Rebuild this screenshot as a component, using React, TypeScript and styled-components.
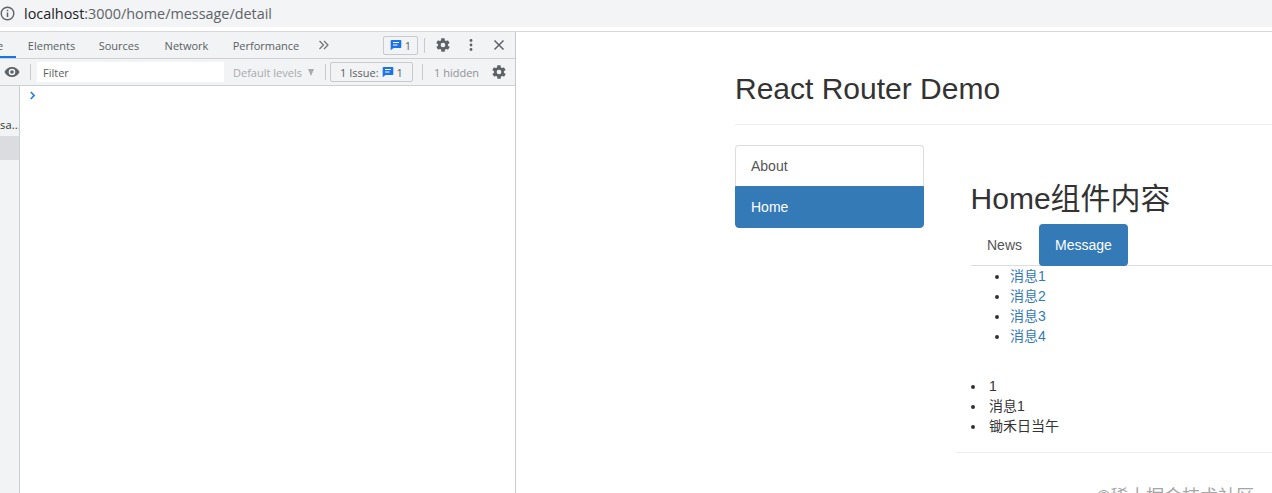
import React from "react";
import styled, { createGlobalStyle } from "styled-components";

const Global = createGlobalStyle`
  html, body { margin: 0; padding: 0; background: #fff; }
  body { width: 1272px; height: 493px; overflow: hidden; font-family: "Liberation Sans", "Noto Sans CJK SC", sans-serif; }
  * { box-sizing: border-box; }
`;

const Page = styled.div`
  width: 1272px; height: 493px; display: flex; flex-direction: column; overflow: hidden; position: relative;
`;
const AddressBar = styled.div`
  height: 27px; background: #f2f4f5; display: flex; align-items: center; padding: 0 0 1px 0; flex: none;
`;
const InfoIcon = styled.svg`
  width: 15px; height: 15px; margin-right: 9px; flex: none;
`;
const UrlHost = styled.span`
  font: 14.4px "Open Sans", "Liberation Sans", sans-serif; color: #202124;
`;
const UrlRest = styled.span`
  font: 14.4px "Open Sans", "Liberation Sans", sans-serif; color: #5f6368;
`;
const Spacer = styled.div`
  height: 4px; background: #fff; flex: none;
`;
const Body = styled.div`
  flex: 1; display: flex; min-height: 0; border-top: 1px solid #d5d7d9;
`;
const DevTools = styled.div`
  width: 516px; flex: none; display: flex; flex-direction: column; border-right: 1px solid #c8cacc;
  font: 11px "Open Sans", "Liberation Sans", sans-serif; color: #5a5a5a;
`;
const TabBar = styled.div`
  height: 27px; background: #f1f3f4; border-bottom: 1px solid #cdd0d3; display: flex; align-items: center; flex: none; overflow: hidden;
`;
const Tab = styled.div<{ $w: number; $active?: boolean }>`
  width: ${p => p.$w}px; height: 26px; line-height: 27px; text-align: ${p => (p.$active ? "left" : "center")}; text-indent: ${p => (p.$active ? "-3px" : "0")}; font-size: 11px; flex: none; color: #5a5f63;
  border-bottom: ${p => (p.$active ? "2px solid #1a73e8" : "none")};
`;
const TabRight = styled.div`
  margin-left: auto; display: flex; align-items: center; height: 100%; padding-right: 8px;
`;
const IssueChip = styled.div`
  display: flex; align-items: center; justify-content: center; gap: 3px; border: 1px solid #c8cacc; border-radius: 2px; color: #5a5f63; font-size: 11px; white-space: nowrap;
`;
const TopChip = styled(IssueChip)`
  width: 35px; height: 19px; margin-right: 6px;
`;
const FilterChip = styled(IssueChip)`
  width: 83px; height: 20px; margin-left: 4px; margin-right: 9px;
`;
const Sep = styled.div<{ $h?: number; $ml?: number }>`
  width: 1px; height: ${p => p.$h ?? 15}px; margin-left: ${p => p.$ml ?? 0}px; background: #c8cacc; flex: none;
`;
const ToolIcon = styled.svg<{ $ml?: number }>`
  width: 16px; height: 16px; flex: none; margin-left: ${p => p.$ml ?? 0}px; display: block;
`;
const FilterBar = styled.div`
  height: 27px; background: #f1f3f4; border-bottom: 1px solid #cdd0d3; display: flex; align-items: center; flex: none;
`;
const FilterInput = styled.div`
  width: 187px; height: 20px; background: #fff; margin-left: 6px; margin-right: 9px; padding-left: 6px; line-height: 21px; font-size: 11px; color: #5a5f63; flex: none;
`;
const Levels = styled.div`
  font-size: 11px; color: #a8aaac; width: 92px; flex: none; white-space: nowrap; display: flex; align-items: center; gap: 6px;
`;
const LevelsCaret = styled.span`
  width: 0; height: 0; border-left: 3.5px solid transparent; border-right: 3.5px solid transparent; border-top: 7px solid #a8aaac;
`;
const Hidden = styled.div`
  font-size: 11px; color: #909295; margin-left: 11px; white-space: nowrap; flex: none; width: 46px;
`;
const ConsoleArea = styled.div`
  flex: 1; display: flex; min-height: 0; background: #fff;
`;
const Sidebar = styled.div`
  width: 20px; flex: none; background: #f1f3f4; border-right: 1px solid #cdd0d3; overflow: hidden; padding-top: 30px;
`;
const SideText = styled.div`
  height: 20px; line-height: 18px; font-size: 11px; color: #333; white-space: nowrap; letter-spacing: 0.2px;
`;
const SideSelected = styled.div`
  height: 24px; background: #dadce0;
`;
const ConsoleMain = styled.div`
  flex: 1; padding: 5px 0 0 9px;
`;
const Site = styled.div`
  flex: 1; min-width: 0; padding-left: 219px; color: #333; font-size: 14px; line-height: 20px; overflow: hidden; background: #fff;
`;
const PageHeader = styled.div`
  height: 93px; border-bottom: 1px solid #eee; padding-top: 40px;
`;
const Title = styled.h2`
  margin: 0; font-size: 30px; font-weight: 400; line-height: 33px; color: #333; white-space: nowrap;
`;
const Columns = styled.div`
  display: flex; padding-top: 20px;
`;
const SideNav = styled.div`
  width: 189px; flex: none; display: flex; flex-direction: column; align-self: flex-start;
`;
const NavLink = styled.div<{ $active?: boolean }>`
  height: ${p => (p.$active ? 42 : 41)}px; padding: ${p => (p.$active ? "10px 15px" : "10px 15px 0")};
  border: 1px solid ${p => (p.$active ? "#337ab7" : "#ddd")};
  border-bottom-width: ${p => (p.$active ? 1 : 0)}px;
  border-radius: ${p => (p.$active ? "0 0 4px 4px" : "4px 4px 0 0")};
  background: ${p => (p.$active ? "#337ab7" : "#fff")}; color: ${p => (p.$active ? "#fff" : "#555")};
`;
const Panel = styled.div`
  margin-left: 32px; width: 400px; flex: none; height: 308px; border-bottom: 1px solid #eee; padding: 37px 0 0 15px;
`;
const Heading = styled.h2`
  margin: 0 0 9px 0; font-size: 30px; font-weight: 400; line-height: 33px; color: #333; white-space: nowrap; transform: translateX(-0.4px);
`;
const Tabs = styled.div`
  display: flex; border-bottom: 1px solid #ddd; height: 42px;
`;
const PillTab = styled.div<{ $active?: boolean }>`
  height: 42px; padding: 11px 16px 0; border-radius: 4px; background: ${p => (p.$active ? "#337ab7" : "transparent")}; color: ${p => (p.$active ? "#fff" : "#555")}; margin-right: 1px;
`;
const MsgList = styled.ul`
  margin: 0 0 30px; padding: 0 0 0 39px;
`;
const Msg = styled.li`
  color: #333;
`;
const MsgLink = styled.a`
  color: #337ab7; text-decoration: none;
`;
const Detail = styled.ul`
  margin: 0; padding: 0 0 0 15px;
`;
const DetailItem = styled.li`
  padding-left: 3px;
`;
const Watermark = styled.div`
  position: absolute; left: 1097px; top: 486px; color: #a6a6a6; font-size: 18px; line-height: 22px; white-space: nowrap;
`;

const Gear = ({ ml }: { ml?: number }) => (
  <ToolIcon $ml={ml} viewBox="0 0 24 24" fill="#5f6368">
    <path d="M19.4 13a7.6 7.6 0 0 0 0-2l2.1-1.6a.5.5 0 0 0 .1-.7l-2-3.4a.5.5 0 0 0-.6-.2l-2.5 1a7.4 7.4 0 0 0-1.7-1l-.4-2.7a.5.5 0 0 0-.5-.4h-4a.5.5 0 0 0-.5.4l-.4 2.7a7.4 7.4 0 0 0-1.7 1l-2.5-1a.5.5 0 0 0-.6.2l-2 3.4a.5.5 0 0 0 .1.7L4.6 11a7.6 7.6 0 0 0 0 2l-2.1 1.6a.5.5 0 0 0-.1.7l2 3.4c.1.2.4.3.6.2l2.5-1c.5.4 1.1.7 1.7 1l.4 2.7c0 .2.3.4.5.4h4c.2 0 .5-.2.5-.4l.4-2.7c.6-.3 1.2-.6 1.7-1l2.5 1c.2.1.5 0 .6-.2l2-3.4a.5.5 0 0 0-.1-.7zM12 15.5a3.5 3.5 0 1 1 0-7 3.5 3.5 0 0 1 0 7z" />
  </ToolIcon>
);
const Bubble = () => (
  <svg width="12" height="12" viewBox="0 0 12 12" style={{ flex: "none" }}>
    <path d="M1.5 1h9a.8.8 0 0 1 .8.8v6.4a.8.8 0 0 1-.8.8H3.5L.7 11.3V1.8A.8.8 0 0 1 1.5 1z" fill="#1a73e8" />
    <path d="M3 3.5h6M3 6h4.5" stroke="#fff" strokeWidth="1.2" />
  </svg>
);

const messages = ["消息1", "消息2", "消息3", "消息4"];

export default function App() {
  return (
    <Page>
      <Global />
      <AddressBar>
        <InfoIcon viewBox="0 0 15 15">
          <circle cx="7.500" cy="7.500" r="6.300" fill="none" stroke="#5f6368" strokeWidth="1.4" />
          <path d="M7.500 6.500v4.500M7.500 3.800v1.500" stroke="#5f6368" strokeWidth="1.5" />
        </InfoIcon>
        <UrlHost>localhost</UrlHost>
        <UrlRest>:3000/home/message/detail</UrlRest>
      </AddressBar>
      <Spacer />
      <Body>
        <DevTools>
          <TabBar>
            <Tab $w={16} $active>e</Tab>
            <Tab $w={71}>Elements</Tab>
            <Tab $w={64}>Sources</Tab>
            <Tab $w={71}>Network</Tab>
            <Tab $w={88}>Performance</Tab>
            <ToolIcon $ml={6} viewBox="0 0 16 16" fill="none" stroke="#6e7174" strokeWidth="1.2">
              <path d="M3.500 4l4 4-4 4M8 4l4 4-4 4" />
            </ToolIcon>
            <TabRight>
              <TopChip><Bubble />1</TopChip>
              <Sep />
              <Gear ml={10} />
              <ToolIcon $ml={12} viewBox="0 0 16 16" fill="#5f6368">
                <circle cx="8" cy="3.500" r="1.400" />
                <circle cx="8" cy="8" r="1.400" />
                <circle cx="8" cy="12.500" r="1.400" />
              </ToolIcon>
              <ToolIcon $ml={12} viewBox="0 0 16 16" fill="none" stroke="#5f6368" strokeWidth="1.500">
                <path d="M3.500 3.500l9 9M12.500 3.500l-9 9" />
              </ToolIcon>
            </TabRight>
          </TabBar>
          <FilterBar>
            <ToolIcon $ml={4} viewBox="0 0 16 16" fill="#5f6368">
              <path d="M8 3C4.500 3 1.600 5.100.5 8c1.100 2.900 4 5 7.500 5s6.400-2.100 7.500-5C14.400 5.100 11.500 3 8 3zm0 8.300A3.300 3.300 0 1 1 8 4.700a3.300 3.300 0 0 1 0 6.600zM8 6.200a1.800 1.800 0 1 0 0 3.600 1.800 1.800 0 0 0 0-3.600z" />
            </ToolIcon>
            <Sep $h={16} $ml={10} />
            <FilterInput>Filter</FilterInput>
            <Levels>Default levels <LevelsCaret /></Levels>
            <Sep $h={16} />
            <FilterChip>1 Issue: <Bubble /> 1</FilterChip>
            <Sep $h={16} />
            <Hidden>1 hidden</Hidden>
            <Gear ml={11} />
          </FilterBar>
          <ConsoleArea>
            <Sidebar>
              <SideText>sa...</SideText>
              <SideSelected />
            </Sidebar>
            <ConsoleMain>
              <svg width="7" height="9" viewBox="0 0 7 9" style={{ display: "block" }} fill="none" stroke="#2b7de9" strokeWidth="1.700">
                <path d="M1.800 1l3.300 3.500L1.800 8" />
              </svg>
            </ConsoleMain>
          </ConsoleArea>
        </DevTools>
        <Site>
          <PageHeader>
            <Title>React Router Demo</Title>
          </PageHeader>
          <Columns>
            <SideNav>
              <NavLink>About</NavLink>
              <NavLink $active>Home</NavLink>
            </SideNav>
            <Panel>
              <Heading>Home组件内容</Heading>
              <Tabs>
                <PillTab>News</PillTab>
                <PillTab $active>Message</PillTab>
              </Tabs>
              <MsgList>
                {messages.map(m => (
                  <Msg key={m}><MsgLink>{m}</MsgLink></Msg>
                ))}
              </MsgList>
              <Detail>
                <DetailItem>1</DetailItem>
                <DetailItem>消息1</DetailItem>
                <DetailItem>锄禾日当午</DetailItem>
              </Detail>
            </Panel>
          </Columns>
        </Site>
      </Body>
      <Watermark>©稀土掘金技术社区</Watermark>
    </Page>
  );
}
